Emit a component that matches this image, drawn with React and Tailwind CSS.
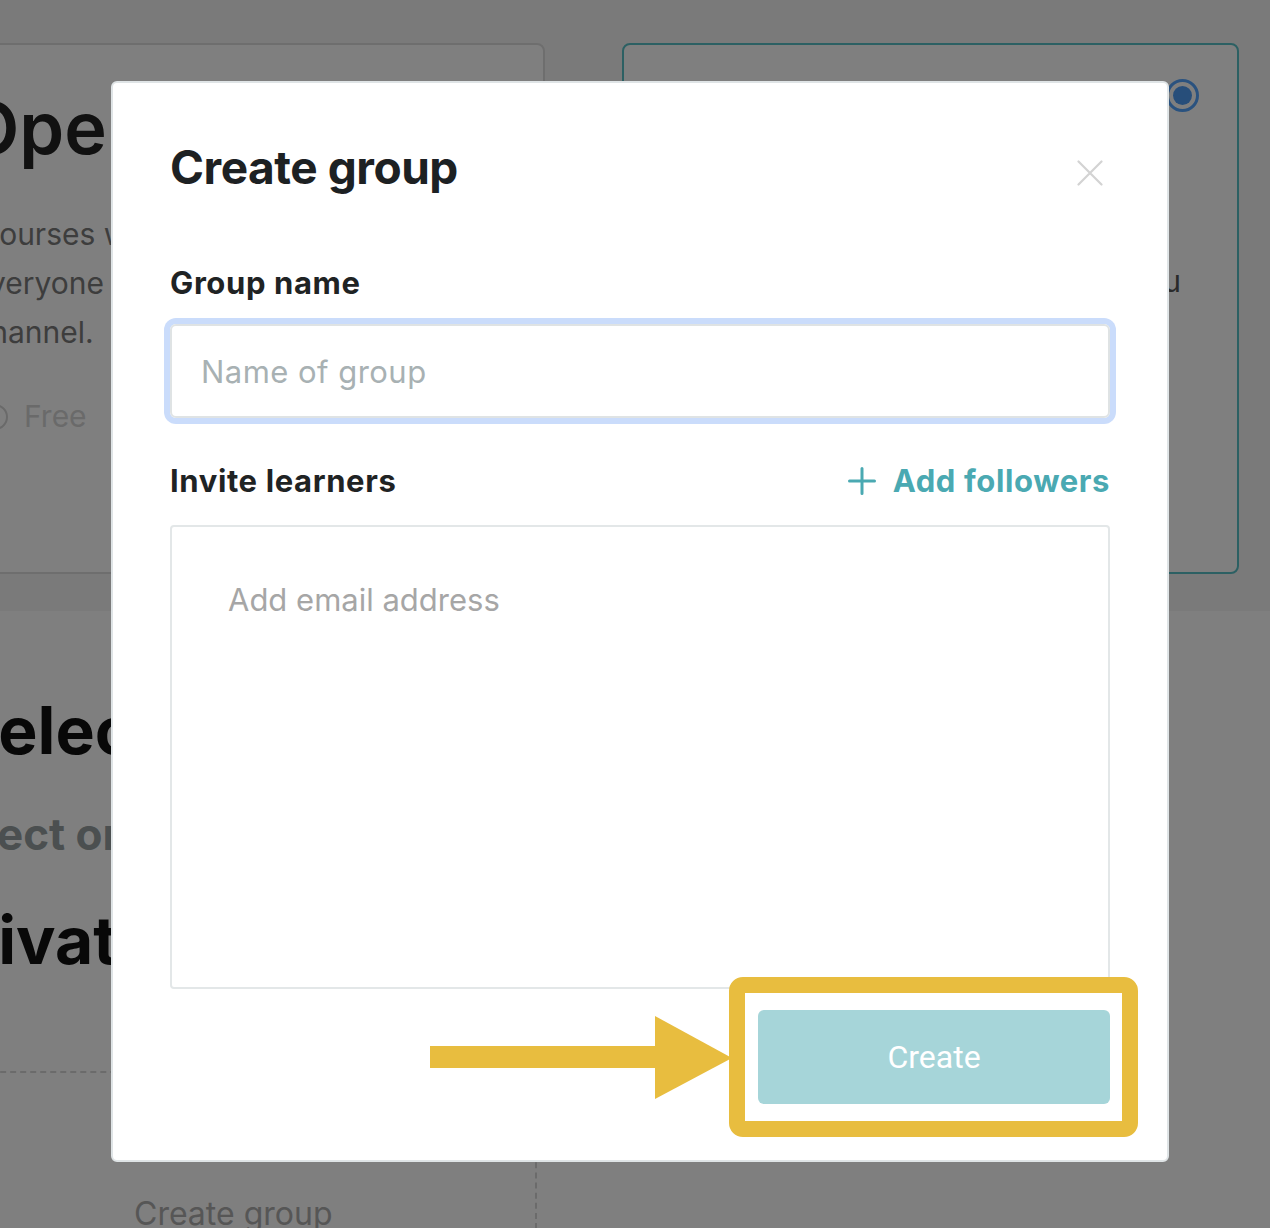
import React from "react";

function CloseIcon() {
  return (
    <svg width="26" height="26" viewBox="0 0 26 26" fill="none">
      <path d="M1.5 1.5 L24.5 24.5 M24.5 1.5 L1.5 24.5" stroke="#d3d3d3" strokeWidth="2.2" strokeLinecap="round" />
    </svg>
  );
}

function PlusIcon() {
  return (
    <svg width="28" height="28" viewBox="0 0 28 28" fill="none">
      <path d="M14 1.5 V26.5 M1.5 14 H26.5" stroke="#4aa9b2" strokeWidth="3" strokeLinecap="round" />
    </svg>
  );
}

export default function App() {
  return (
    <div className="relative w-[1270px] h-[1228px] overflow-hidden bg-white font-['Inter','Noto_Sans',sans-serif]">
      {/* Background page */}
      <section className="h-[611px] bg-[#f4f4f4] pt-[43px] flex">
        <div className="ml-[-100px] w-[645px] h-[531px] shrink-0 rounded-[8px] border-2 border-[#dcdcdc] bg-white pl-[62px] pt-[47px] flex flex-col">
          <div className="text-[72px] leading-[72px] font-semibold text-[#222] whitespace-nowrap">Open group</div>
          <div className="mt-[46px] text-[30px] leading-[49px] text-[#7a7a7a] whitespace-nowrap">
            <div className="ml-[18px]">courses will be visible to</div>
            <div className="ml-[8px]">everyone who joins this</div>
            <div className="ml-[9px]">channel.</div>
          </div>
          <div className="mt-[35px] flex items-center gap-[16px] h-[49px]">
            <span className="ml-[18px] w-[26px] h-[26px] rounded-full border-2 border-[#d4d4d4]" />
            <span className="text-[30px] text-[#d4d4d4]">Free</span>
          </div>
        </div>
        <div className="ml-[77px] w-[617px] h-[531px] shrink-0 rounded-[8px] border-2 border-[#58c0c6] bg-white pr-[38px] pt-[34px] pl-[40px] flex flex-col">
          <div className="flex items-start justify-between h-[72px]">
            <div className="text-[72px] leading-[72px] font-semibold text-[#222] whitespace-nowrap">Private</div>
            <span className="w-[33px] h-[33px] rounded-full border-[3px] border-[#55a5ff] flex items-center justify-center">
              <span className="w-[19px] h-[19px] rounded-full bg-[#4f9df5]" />
            </span>
          </div>
          <div className="mt-[57px] text-[30px] leading-[49px] text-[#555] whitespace-nowrap flex flex-col">
            <div>Only invited people can</div>
            <div className="self-end mr-[18px]">see the courses you</div>
            <div>share.</div>
          </div>
        </div>
      </section>

      <section className="pt-[86px] flex flex-col">
        <div className="ml-[-45px] text-[66px] leading-[66px] font-bold text-[#111] whitespace-nowrap">Select group type</div>
        <div className="ml-[-70px] mt-[49px] text-[44px] leading-[44px] font-bold text-[#979fa1] whitespace-nowrap">Select one of the options</div>
        <div className="ml-[-72px] mt-[51px] text-[66px] leading-[66px] font-bold text-[#111] whitespace-nowrap">Private groups</div>
        <div className="ml-[-100px] mt-[98px] w-[637px] h-[300px] border-2 border-dashed border-[#d6d6d6] pl-[232px] pt-[122px]">
          <div className="text-[32px] leading-[38px] text-[#adadad] whitespace-nowrap">Create group</div>
        </div>
      </section>

      {/* Dim overlay */}
      <div className="absolute inset-0 bg-black/50" />

      {/* Modal */}
      <div className="absolute left-[111px] top-[81px] w-[1058px] rounded-[6px] border-2 border-[#dfe4e6] bg-white px-[57px] pt-[61px] pb-[56px]">
        <div className="flex items-start justify-between">
          <h2 className="text-[46px] leading-[46px] font-bold text-[#1d2123] tracking-[-0.01em]">Create group</h2>
          <button className="mt-[16px] mr-[7px]" aria-label="Close">
            <CloseIcon />
          </button>
        </div>

        <label className="block mt-[75px] text-[31px] leading-[36px] font-bold tracking-[0.02em] text-[#1f2324]">Group name</label>
        <input
          type="text"
          placeholder="Name of group"
          className="block mt-[23px] w-full h-[94px] rounded-[6px] border-2 border-[#dfe3e4] pl-[29px] text-[31px] leading-[36px] tracking-[0.015em] text-[#1f2324] outline-none ring-[6px] ring-[#cadcfb] placeholder:text-[#a8b1b3]"
        />

        <div className="mt-[45px] flex items-center justify-between h-[36px]">
          <span className="text-[31px] leading-[36px] font-bold tracking-[0.02em] text-[#1f2324]">Invite learners</span>
          <button className="flex items-center gap-[17px]">
            <PlusIcon />
            <span className="text-[31px] leading-[36px] font-bold tracking-[0.02em] text-[#4aa9b2]">Add followers</span>
          </button>
        </div>

        <textarea
          placeholder="Add email address"
          className="block mt-[26px] w-full h-[464px] resize-none rounded-[4px] border-2 border-[#e3e7e8] pl-[56px] pt-[55px] text-[31px] leading-[36px] text-[#1f2324] outline-none placeholder:text-[#a6a6a6]"
        />

        <div className="mt-[21px] flex justify-end">
          <button className="w-[352px] h-[94px] rounded-[6px] bg-[#a6d5d9] text-white text-[32px] font-['Roboto',sans-serif]">
            Create
          </button>
        </div>
      </div>

      {/* Annotation */}
      <svg className="absolute left-[428px] top-[1014px]" width="306" height="88" viewBox="0 0 306 88">
        <rect x="2" y="32" width="230" height="22" fill="#e8bd3f" />
        <polygon points="227,2 304,44 227,85" fill="#e8bd3f" />
      </svg>
      <div className="absolute left-[729px] top-[977px] w-[409px] h-[160px] rounded-[14px] border-[16px] border-[#e8bd3f]" />
    </div>
  );
}
